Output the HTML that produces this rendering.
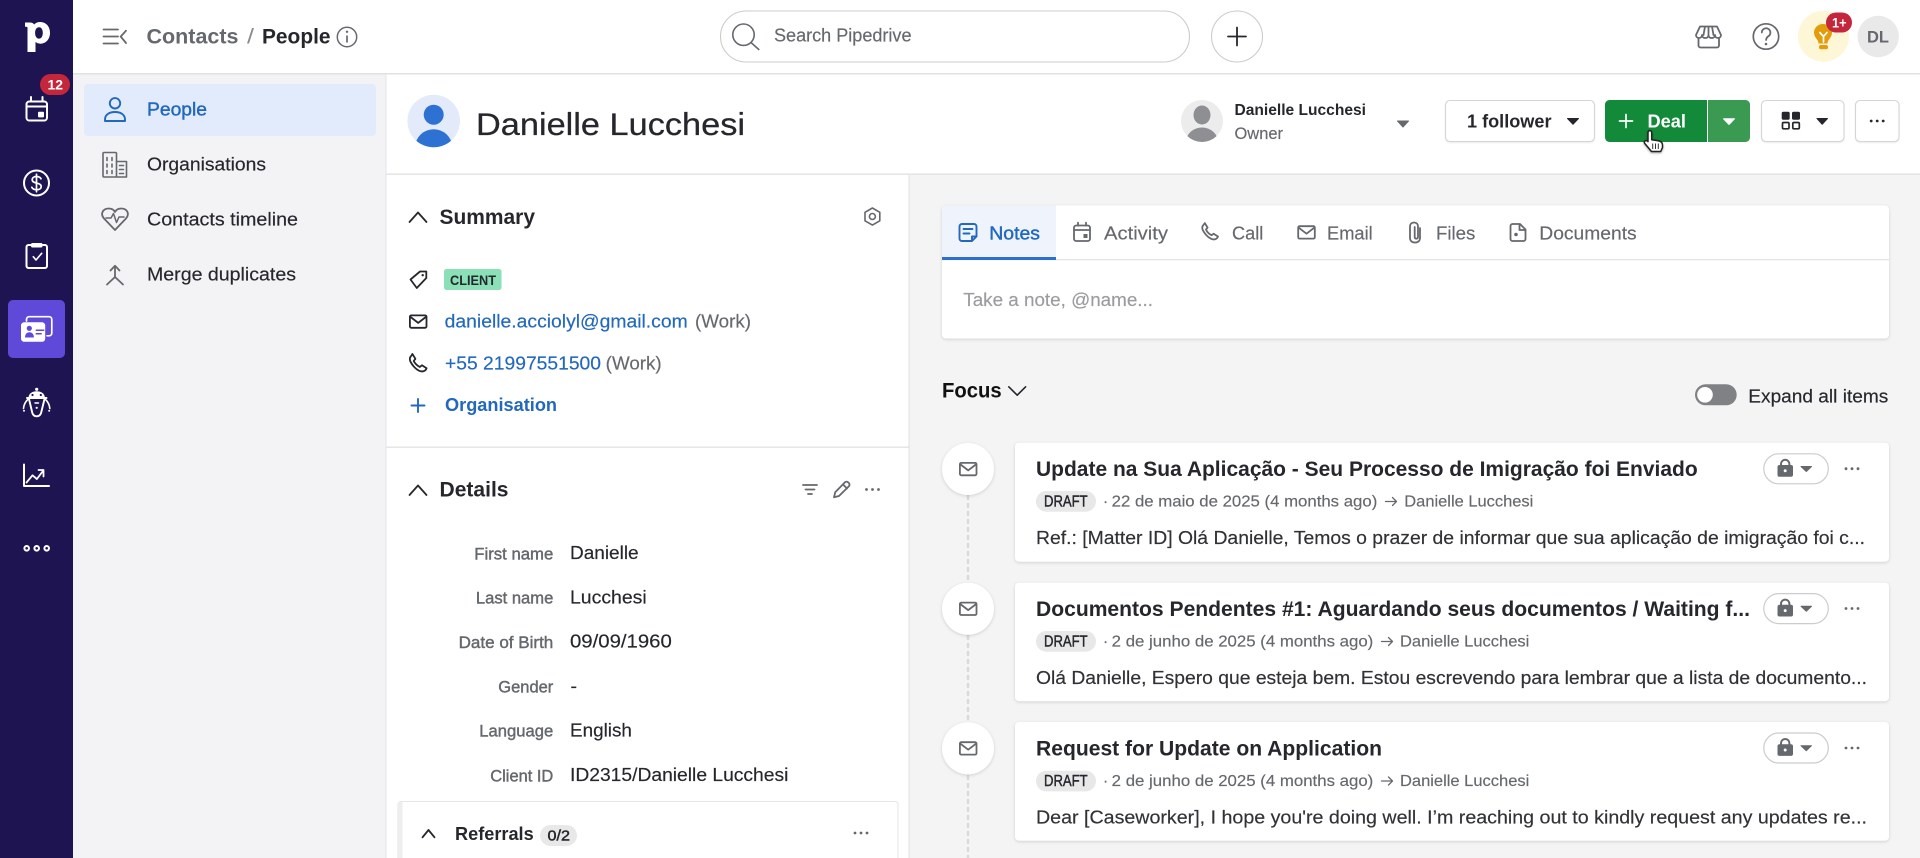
<!DOCTYPE html>
<html lang="en">
<head>
<meta charset="utf-8">
<title>Danielle Lucchesi - Pipedrive</title>
<style>
html,body{margin:0;padding:0;width:1920px;height:858px;overflow:hidden;background:#f4f4f4}
svg{display:block}
text{font-family:"Liberation Sans",Arial,sans-serif;font-size:18.300px;fill:#25272d;stroke:#25272d;stroke-width:.16;white-space:pre}
.g{fill:#65686d;stroke:#65686d}.bl{fill:#2268bd;stroke:#2268bd}
.m{stroke:#25272d;stroke-width:.45}
.mg{fill:#65686d;stroke:#65686d;stroke-width:.42}
.mb{fill:#2268bd;stroke:#2268bd;stroke-width:.42}
.b{font-weight:bold;stroke:none}
.card{fill:#fff;filter:drop-shadow(0 1px 1.5px rgba(0,0,0,.14))}
.btn{fill:#fff;stroke:#d4d5d7;stroke-width:1.100;filter:drop-shadow(0 1px .6px rgba(0,0,0,.08))}
.i{fill:none;stroke-linecap:round;stroke-linejoin:round}
.w{stroke:#fff;stroke-width:2}
.gi{stroke:#65686d;stroke-width:1.800}
.di{stroke:#25272d;stroke-width:1.800}
.bi{stroke:#2268bd;stroke-width:1.900}
.sm{font-size:15.700px}
.lb{font-size:16.500px}
.t{font-size:21.500px;font-weight:bold;stroke:none}
</style>
</head>
<body>
<svg width="1920" height="858" viewBox="0 0 1920 858" xmlns="http://www.w3.org/2000/svg">
<defs>
<clipPath id="av"><circle cx="433.700" cy="121" r="26.300"/></clipPath>
<clipPath id="ow"><circle cx="1202" cy="121" r="21"/></clipPath>
<g id="env" class="i"><rect x="0.900" y="0.900" width="16.600" height="12.400" rx="1.400"/><path d="M1.400 2.400 9.200 8.400 17 2.400"/></g>
<g id="d3"><circle cx="-6" r="1.400"/><circle cx="0" r="1.400"/><circle cx="6" r="1.400"/></g>
</defs>

<rect width="1920" height="858" fill="#f4f4f4"/>

<!-- Rail -->
<g>
<rect width="73" height="858" fill="#1f1452"/>
<path fill="#fff" fill-rule="evenodd" d="M25 22.500h5c1.900 0 3.300.7 4.200 2 1.500-1.600 3.500-2.500 5.800-2.500 6 0 10 4.500 10 10.800S46 43.700 40.500 43.700c-2 0-3.800-.7-5-1.800V52h-8V28c0-1-.3-1.300-1.200-1.300H25ZM39 27.200c-2.600 0-3.900 2.500-3.900 5.700s1.400 5.800 3.900 5.800c2.400 0 3.800-2.500 3.800-5.800s-1.400-5.700-3.800-5.700Z"/>
<g class="i w"><rect x="26.500" y="101.500" width="20.500" height="19" rx="2.800"/><path d="M31 97v4M42.500 97v4M26.500 106.500h20.500"/></g>
<rect x="38" y="111.700" width="6" height="5.700" rx="1" fill="#fff"/>
<rect x="40" y="74" width="30" height="21" rx="10.500" fill="#c4273c"/>
<text x="47.500" y="89.600" class="b" style="font-size:14px;fill:#fff" textLength="15.500" lengthAdjust="spacingAndGlyphs">12</text>
<g class="i w"><circle cx="36.500" cy="183" r="12.500"/><path d="M41 178.800c-.8-1.500-2.400-2.300-4.500-2.300-2.600 0-4.300 1.300-4.300 3.200 0 4.500 9 2.300 9 6.800 0 2-1.900 3.300-4.700 3.300-2.200 0-3.900-.9-4.700-2.500M36.500 174.200v17.600" style="stroke-width:1.700"/></g>
<g class="i w"><rect x="26.500" y="245" width="20.500" height="23" rx="2"/><path d="M33.300 256.700 36 260l5.700-6.700" style="stroke-width:1.600"/></g>
<rect x="31" y="243" width="11.500" height="4.500" rx="1.500" fill="#fff"/>
<rect x="8" y="300" width="57" height="58" rx="5" fill="#5f49d8"/>
<path class="i" stroke="#fff" stroke-width="1.700" d="M26.500 321v-1.500a2.800 2.800 0 0 1 2.800-2.800H49a2.800 2.800 0 0 1 2.800 2.800V333a2.800 2.800 0 0 1-2.800 2.800h-2"/>
<rect x="21" y="322.300" width="24.200" height="19.500" rx="3.200" fill="#fff"/>
<circle cx="29.300" cy="328.300" r="2.600" fill="#5f49d8"/>
<path d="M25 337.500c0-3.500 1.800-5.300 4.400-5.300s4.500 1.800 4.500 5.300Z" fill="#5f49d8"/>
<path stroke="#5f49d8" stroke-width="1.500" d="M35.700 330.200h8.600M35.700 333.700h6"/>
<circle cx="36.700" cy="389.300" r="1.600" fill="#fff"/>
<path d="M28.500 397.300c.4-3.800 3.800-6 8.200-6s7.800 2.200 8.200 6Z" fill="#fff"/>
<circle cx="32.500" cy="395" r="1.100" fill="#1f1452"/><circle cx="40.800" cy="395" r="1.100" fill="#1f1452"/>
<g class="i" stroke="#fff" stroke-width="1.900">
<path d="M27 398h19.500"/>
<path d="M29 399l3.200 13.500c.6 2.500 2.400 3.800 4.500 3.800s3.900-1.300 4.500-3.800L44.500 399"/>
<path d="M28.300 399c-2.800 2.500-4.500 5.500-4.800 9.500M45 399c2.800 2.500 4.500 5.500 4.800 9.500" stroke-width="1.600"/>
<path d="M35 403h3.500" stroke-width="1.400"/>
</g>
<circle cx="36.700" cy="407.800" r="1.100" fill="#fff"/><circle cx="24" cy="410.800" r="1" fill="#fff"/><circle cx="49.200" cy="410.800" r="1" fill="#fff"/>
<g class="i w"><path d="M24 464.500V486h25"/><path d="M26.500 482.500l6-7.200 4.400 3.700 6.400-8.500M38.500 470h5v6.500" style="stroke-width:1.800"/></g>
<g fill="none" stroke="#fff" stroke-width="2"><circle cx="26.700" cy="548.300" r="2.300"/><circle cx="36.700" cy="548.300" r="2.300"/><circle cx="46.700" cy="548.300" r="2.300"/></g>
</g>

<!-- Subnav -->
<g>
<rect x="73" y="73" width="313" height="785" fill="#f3f3f5"/>
<rect x="385.500" y="73" width="1.500" height="785" fill="#e6e6e8"/>
<rect x="84" y="84" width="292" height="52" rx="4" fill="#e1ebfc"/>
<g class="i bi"><circle cx="115" cy="103.300" r="5.200"/><path d="M105 121v-1.500c0-5 4.500-7.500 10-7.500s10 2.500 10 7.500v1.500Z"/></g>
<text x="147" y="115.500" class="mb" textLength="60" lengthAdjust="spacingAndGlyphs">People</text>
<g class="i gi" style="stroke-width:1.600"><rect x="103" y="152.500" width="13.500" height="24.500" rx="1"/><path d="M116.500 161.500h10v15.500h-10M107 157.500v3M112 157.500v3M107 164v3M112 164v3M107 170.500v3M112 170.500v3M119.500 165.500h4M119.500 169.500h4M119.500 173.500h4"/></g>
<text x="147" y="170.500" textLength="119" lengthAdjust="spacingAndGlyphs">Organisations</text>
<g class="i gi"><path d="M115 230 104.500 219c-4.800-5-1.700-10.500 4.300-10.500 3 0 5.200 1.500 6.200 3.500 1-2 3.200-3.500 6.200-3.500 6 0 9.100 5.500 4.300 10.500Z"/><path d="M106 218h5l2.500-4.500 3 9 2.500-5.500h5" style="stroke-width:1.500"/></g>
<text x="147" y="225.500" textLength="151" lengthAdjust="spacingAndGlyphs">Contacts timeline</text>
<g class="i gi"><path d="M110.500 270.500 115 265.800l4.500 4.700M115 266v11M115 277l-8 7.500M115 277l8 7.500"/></g>
<text x="147" y="280.500" textLength="149" lengthAdjust="spacingAndGlyphs">Merge duplicates</text>
</g>

<!-- Top bar -->
<g>
<rect x="73" y="0" width="1847" height="73" fill="#fff"/>
<rect x="73" y="73" width="1847" height="1.500" fill="#e1e1e2"/>
<g class="i gi"><path d="M103.500 29.500H118M103.500 36.500H118M103.500 43.500H118M126 30.700l-5.300 5.900 5.300 6.400"/></g>
<text x="146.500" y="43.500" class="b" style="font-size:21px;fill:#65686d" textLength="92" lengthAdjust="spacingAndGlyphs">Contacts</text>
<text x="247" y="43.500" style="font-size:21px;fill:#8a8c90;stroke:none" textLength="7" lengthAdjust="spacingAndGlyphs">/</text>
<text x="262" y="43.500" class="b" style="font-size:21px" textLength="68.500" lengthAdjust="spacingAndGlyphs">People</text>
<circle cx="347" cy="37" r="9.700" fill="none" stroke="#65686d" stroke-width="1.500"/>
<path d="M347 35.500v7" stroke="#65686d" stroke-width="1.700" fill="none"/><circle cx="347" cy="31.800" r="1.200" fill="#65686d"/>
<rect x="720.500" y="11" width="469" height="51" rx="25.500" fill="#fff" stroke="#cbcccd" stroke-width="1.100"/>
<g class="i" stroke="#65686d" stroke-width="1.600"><circle cx="743.500" cy="34.700" r="10.700"/><path d="M751.500 43l7.300 6.500"/></g>
<text x="774" y="41.700" class="g" textLength="137.500" lengthAdjust="spacingAndGlyphs">Search Pipedrive</text>
<rect x="1211.500" y="11" width="51" height="51" rx="25.500" fill="#fff" stroke="#cbcccd" stroke-width="1.100"/>
<path d="M1237 27.500v18M1228 36.500h18" stroke="#25272d" stroke-width="1.800" stroke-linecap="round"/>
<g class="i gi"><path d="M1700 26.500h17l4 8.500c0 2-1.500 3-3 3s-3-1-3-3c0 2-1.700 3-3.300 3s-3.200-1-3.200-3c0 2-1.600 3-3.200 3s-3.300-1-3.300-3c0 2-1.500 3-3 3s-3-1-3-3ZM1705 26.500l-1.500 8.500M1712 26.500l1.500 8.500M1708.500 26.500V35"/><path d="M1698.500 38v7.500a2 2 0 0 0 2 2h16.500a2 2 0 0 0 2-2V38"/></g>
<circle cx="1766" cy="36.500" r="12.700" fill="none" stroke="#65686d" stroke-width="1.700"/>
<path class="i gi" d="M1761.800 32.500a4.300 4.300 0 1 1 6.900 3.500c-1.600 1.100-2.600 2-2.600 4"/><circle cx="1766" cy="44" r="1.300" fill="#65686d"/>
<circle cx="1823.500" cy="36.200" r="25.500" fill="#fdf6d7"/>
<path d="M1823 24c-5 0-9 3.800-9 8.500 0 3.200 1.800 5.300 3.200 7.300.9 1.300 1.300 2.300 1.300 3.700h9c0-1.400.4-2.400 1.300-3.700 1.400-2 3.200-4.100 3.200-7.300 0-4.700-4-8.500-9-8.500Z" fill="#e29c0c"/>
<rect x="1819" y="45" width="9" height="4.300" rx="2" fill="#e29c0c"/>
<path class="i" stroke="#fff" stroke-width="1.700" d="M1819.800 32.500 1823.500 36.500 1827 32.500M1823.500 36.500V42"/>
<rect x="1826" y="12.500" width="26" height="20" rx="10" fill="#c4273c"/>
<text x="1832" y="27.600" class="b" style="font-size:14px;fill:#fff" textLength="14.500" lengthAdjust="spacingAndGlyphs">1+</text>
<circle cx="1878.200" cy="36.500" r="20.700" fill="#e9e9ea"/>
<text x="1867" y="42.700" class="b" style="font-size:17px;fill:#65686d" textLength="22" lengthAdjust="spacingAndGlyphs">DL</text>
</g>

<!-- Contact header -->
<g>
<rect x="386.500" y="74.500" width="1533.500" height="100" fill="#fff"/>
<rect x="386.500" y="173.500" width="1533.500" height="1.300" fill="#e1e1e2"/>
<circle cx="433.700" cy="121" r="26.300" fill="#e3ebfa"/>
<g clip-path="url(#av)" fill="#2d72d2"><circle cx="433.700" cy="114.700" r="10"/><ellipse cx="433.700" cy="147" rx="18.500" ry="17.700"/></g>
<text x="476" y="135" style="font-size:31.500px;stroke-width:.25" textLength="269" lengthAdjust="spacingAndGlyphs">Danielle Lucchesi</text>
<circle cx="1202" cy="121" r="21" fill="#ececed"/>
<g clip-path="url(#ow)" fill="#8e8f92"><ellipse cx="1202" cy="115" rx="8.500" ry="9.500"/><ellipse cx="1202" cy="142" rx="16" ry="14.500"/></g>
<text x="1234.500" y="115" class="b" style="font-size:15.500px" textLength="131.500" lengthAdjust="spacingAndGlyphs">Danielle Lucchesi</text>
<text x="1234.500" y="139" class="g" style="font-size:16.500px" textLength="48.500" lengthAdjust="spacingAndGlyphs">Owner</text>
<path d="M1397.500 121h11l-5.500 6Z" fill="#65686d" stroke="#65686d" stroke-linejoin="round"/>
<rect x="1445.500" y="100.500" width="149" height="41" rx="4.500" class="btn"/>
<text x="1467" y="127.300" class="b" style="font-size:18.500px" textLength="84.500" lengthAdjust="spacingAndGlyphs">1 follower</text>
<path d="M1567.500 118.500h11l-5.500 5.800Z" fill="#25272d" stroke="#25272d" stroke-linejoin="round"/>
<path d="M1609.500 100H1707v42h-97.500a4.500 4.500 0 0 1-4.500-4.500v-33a4.500 4.500 0 0 1 4.500-4.500Z" fill="#138a3a"/>
<path d="M1708 100h37.500a4.500 4.500 0 0 1 4.500 4.500v33a4.500 4.500 0 0 1-4.500 4.500H1708Z" fill="#3b9a51"/>
<path d="M1626 114.500v13M1619.500 121h13" stroke="#fff" stroke-width="1.700" stroke-linecap="round"/>
<text x="1647.500" y="127.300" class="b" style="font-size:18.500px;fill:#fff" textLength="38.500" lengthAdjust="spacingAndGlyphs">Deal</text>
<path d="M1723.500 118.800h11l-5.500 5.700Z" fill="#fff" stroke="#fff" stroke-linejoin="round"/>
<g style="filter:drop-shadow(0 1px 1px rgba(0,0,0,.35))">
<path d="M1648 132.500c0-2.500 3.700-2.500 3.700 0v7.200l6.500 1.100c2.700.5 4.300 1.700 4.300 4.200v2.500l-1.800 4h-9.200l-6.700-8c-1.600-2.100 1.100-3.900 3-2.100l.2.200Z" fill="#fff" stroke="#222" stroke-width="1.500" stroke-linejoin="round"/>
<path d="M1652.700 143.500v5.500M1655.500 143.500v5.500M1658.300 143.500v5.500" stroke="#333" stroke-width="1"/>
</g>
<rect x="1761.500" y="100.500" width="82.500" height="41" rx="4.500" class="btn"/>
<g fill="#25272d"><rect x="1781.700" y="111.700" width="8" height="8" rx="1.600"/><rect x="1792" y="111.700" width="8" height="8" rx="1.600"/></g>
<g fill="none" stroke="#25272d" stroke-width="1.700"><rect x="1782.500" y="122.500" width="6.500" height="6.300" rx="1.200"/><rect x="1792.800" y="122.500" width="6.500" height="6.300" rx="1.200"/></g>
<path d="M1817 118.500h10.500l-5.300 5.800Z" fill="#25272d" stroke="#25272d" stroke-linejoin="round"/>
<rect x="1855.500" y="100.500" width="43.500" height="41" rx="4.500" class="btn"/>
<use href="#d3" x="1877.200" y="121" fill="#25272d"/>
</g>

<!-- Left panel -->
<g>
<rect x="386.500" y="175" width="523" height="683" fill="#fff"/>
<rect x="908.500" y="175" width="1.300" height="683" fill="#e6e6e7"/>
<path class="i di" d="M409.500 222l8.500-9.500 8.500 9.500"/>
<text x="439.500" y="224" class="b" style="font-size:21.500px" textLength="95.500" lengthAdjust="spacingAndGlyphs">Summary</text>
<g class="i gi" style="stroke-width:1.600"><path d="M872.400 208l7.400 4.300v8.500l-7.400 4.300-7.400-4.300v-8.500Z"/><circle cx="872.400" cy="216.500" r="3"/></g>
<g class="i di"><path d="M410.500 279.500 420 271.500h6.300v6.500l-9.500 10Z"/></g><circle cx="422.700" cy="275.200" r="1.200" fill="#25272d"/>
<rect x="444" y="269" width="57.500" height="21" rx="2.500" fill="#8be0b7"/>
<text x="450" y="285" class="b" style="font-size:14px" textLength="46" lengthAdjust="spacingAndGlyphs">CLIENT</text>
<use href="#env" x="409" y="314.500" class="di"/>
<text x="444.700" y="327.700" class="bl" textLength="243" lengthAdjust="spacingAndGlyphs">danielle.acciolyl@gmail.com</text>
<text x="695" y="327.700" class="g" textLength="56" lengthAdjust="spacingAndGlyphs">(Work)</text>
<path class="i di" d="M411.500 355.500c-1.800 1.600-2 4-1 6.200 1.600 3.300 5 7.300 8.500 9 2.300 1 4.800 1 6.600-.7l1-1.700-4.700-3-2.200 1.700c-2.300-1.100-5-3.800-6-6l1.700-2.200-3-4.800Z"/>
<text x="445" y="369.300" class="bl" textLength="156" lengthAdjust="spacingAndGlyphs">+55 21997551500</text>
<text x="605.700" y="369.300" class="g" textLength="56" lengthAdjust="spacingAndGlyphs">(Work)</text>
<path d="M418 399v13M411.500 405.500h13" stroke="#2268bd" stroke-width="1.900" stroke-linecap="round"/>
<text x="445" y="411" class="bl b" textLength="112" lengthAdjust="spacingAndGlyphs">Organisation</text>
<rect x="386.500" y="446.500" width="523" height="1.300" fill="#e1e1e2"/>
<path class="i di" d="M409.500 495l8.500-9.500 8.500 9.500"/>
<text x="439.500" y="496.700" class="b" style="font-size:21.500px" textLength="69" lengthAdjust="spacingAndGlyphs">Details</text>
<path class="i gi" d="M803 485h14M805.500 489.500h9M808 494h4"/>
<g class="i gi"><path d="M834 497.300l1.200-5L845 482.300a2.200 2.200 0 0 1 3.100 0l.8.8a2.200 2.200 0 0 1 0 3.100L839 496ZM843 484.500l4 4"/></g>
<use href="#d3" x="872.500" y="489.500" fill="#65686d"/>

<text x="474.300" y="559.300" class="lb mg" textLength="79" lengthAdjust="spacingAndGlyphs">First name</text>
<text x="475.900" y="603.700" class="lb mg" textLength="77.400" lengthAdjust="spacingAndGlyphs">Last name</text>
<text x="458.600" y="648" class="lb mg" textLength="94.700" lengthAdjust="spacingAndGlyphs">Date of Birth</text>
<text x="498.300" y="692.300" class="lb mg" textLength="55" lengthAdjust="spacingAndGlyphs">Gender</text>
<text x="479.300" y="736.700" class="lb mg" textLength="74" lengthAdjust="spacingAndGlyphs">Language</text>
<text x="490.300" y="781.300" class="lb mg" textLength="63" lengthAdjust="spacingAndGlyphs">Client ID</text>
<text x="570" y="559" textLength="68.600" lengthAdjust="spacingAndGlyphs">Danielle</text>
<text x="570" y="603.300" textLength="76.700" lengthAdjust="spacingAndGlyphs">Lucchesi</text>
<text x="570" y="647.700" textLength="101.800" lengthAdjust="spacingAndGlyphs">09/09/1960</text>
<text x="570.500" y="692" textLength="6.500" lengthAdjust="spacingAndGlyphs">-</text>
<text x="570" y="736.700" textLength="61.900" lengthAdjust="spacingAndGlyphs">English</text>
<text x="570" y="781" textLength="218.400" lengthAdjust="spacingAndGlyphs">ID2315/Danielle Lucchesi</text>

<rect x="398" y="801.500" width="500" height="70" rx="3" fill="#fff" stroke="#e6e6e7" stroke-width="1.100"/>
<rect x="398" y="802" width="4.500" height="56" fill="#eeeeef"/>
<path class="i di" d="M422.500 837.300l6-7.300 6 7.300"/>
<text x="455" y="840" class="b" style="font-size:18.500px" textLength="78.700" lengthAdjust="spacingAndGlyphs">Referrals</text>
<rect x="540" y="825" width="37" height="21" rx="10.500" fill="#e8e8e9"/>
<text x="547.500" y="840.500" class="m" style="font-size:14.500px" textLength="22.500" lengthAdjust="spacingAndGlyphs">0/2</text>
<use href="#d3" x="861" y="833" fill="#65686d"/>
</g>

<!-- Composer -->
<g>
<rect x="942" y="205.500" width="947" height="133" rx="4" class="card"/>
<path d="M946 205.500h110V260H942v-50.500a4 4 0 0 1 4-4Z" fill="#eff4fc"/>
<rect x="942" y="259" width="947" height="1.300" fill="#e4e4e5"/>
<rect x="942" y="257" width="114" height="3" fill="#2d6fd0"/>
<g class="i bi"><path d="M972 241h-10a2.500 2.500 0 0 1-2.500-2.500v-12a2.500 2.500 0 0 1 2.500-2.500h12a2.500 2.500 0 0 1 2.500 2.500V236.500L972 241Zm0 0v-4.500h4.500M963.500 229h9M963.500 233.500h6"/></g>
<text x="989.300" y="239.300" class="mb" textLength="50.700" lengthAdjust="spacingAndGlyphs">Notes</text>
<g class="i gi"><rect x="1074" y="225.500" width="16" height="15.500" rx="2.200"/><path d="M1078 222.700v3M1086 222.700v3M1074 230h16"/></g><rect x="1083.500" y="234" width="4" height="4" fill="#65686d"/>
<text x="1104" y="239.300" class="g" textLength="64" lengthAdjust="spacingAndGlyphs">Activity</text>
<path class="i gi" d="M1203.800 224.500c-1.700 1.500-1.900 3.700-.9 5.800 1.500 3.100 4.700 6.800 8 8.400 2.100 1 4.500 1 6.200-.6l.9-1.600-4.400-2.800-2 1.500c-2.100-1-4.600-3.500-5.600-5.600l1.600-2-2.800-4.500Z"/>
<text x="1232" y="239.300" class="g" textLength="31.300" lengthAdjust="spacingAndGlyphs">Call</text>
<use href="#env" x="1297.300" y="225.300" class="gi"/>
<text x="1327" y="239.300" class="g" textLength="45.700" lengthAdjust="spacingAndGlyphs">Email</text>
<path class="i gi" d="M1420 228v10c0 2.800-2 4.500-5 4.500s-5-1.700-5-4.500v-11.500c0-2.500 1.700-4 4-4s4 1.500 4 4V237c0 1-.7 1.700-1.700 1.700s-1.600-.7-1.600-1.700V227"/>
<text x="1436" y="239.300" class="g" textLength="39.300" lengthAdjust="spacingAndGlyphs">Files</text>
<path class="i gi" d="M1512.500 224h7.500l5.500 5.500V239a2 2 0 0 1-2 2h-11a2 2 0 0 1-2-2v-13a2 2 0 0 1 2-2ZM1519.500 224.500v5.500h5.500"/><circle cx="1516" cy="234.500" r="1.800" fill="#65686d"/>
<text x="1539.300" y="239.300" class="g" textLength="97.400" lengthAdjust="spacingAndGlyphs">Documents</text>
<text x="963.300" y="306" style="fill:#9a9c9f;stroke:#9a9c9f" textLength="189.700" lengthAdjust="spacingAndGlyphs">Take a note, @name...</text>
</g>

<!-- Focus -->
<text x="942" y="397.300" class="b" style="font-size:21px;fill:#111" textLength="59.700" lengthAdjust="spacingAndGlyphs">Focus</text>
<path class="i di" style="stroke-width:1.600" d="M1008.800 386.800l8.400 8.400 8.400-8.400"/>
<rect x="1695" y="384.300" width="41.700" height="21" rx="10.500" fill="#808184"/>
<circle cx="1705" cy="394.800" r="7.800" fill="#fff"/>
<text x="1748.300" y="402.300" textLength="140" lengthAdjust="spacingAndGlyphs">Expand all items</text>

<!-- Timeline -->
<path d="M968 495v88M968 635v87M968 775v83" stroke="#dadadb" stroke-width="2.500" stroke-dasharray="5 3" fill="none"/>
<g>
<circle cx="968" cy="469" r="26" class="card"/><use href="#env" x="959" y="462" class="gi"/>
<circle cx="968" cy="608.700" r="26" class="card"/><use href="#env" x="959" y="601.700" class="gi"/>
<circle cx="968" cy="748.300" r="26" class="card"/><use href="#env" x="959" y="741.300" class="gi"/>
</g>

<!-- Card 1 -->
<g>
<rect x="1015" y="442.700" width="874" height="119" rx="4" class="card"/>
<text x="1036" y="476" class="t" textLength="661.700" lengthAdjust="spacingAndGlyphs">Update na Sua Aplicação - Seu Processo de Imigração foi Enviado</text>
<rect x="1036" y="491" width="60" height="20.700" rx="10.300" fill="#e8e8e9"/>
<text x="1044" y="506.400" class="sm m" textLength="43.700" lengthAdjust="spacingAndGlyphs">DRAFT</text>
<text x="1103" y="506.600" class="sm g">·</text>
<text x="1111.700" y="506.600" class="sm g" textLength="265.600" lengthAdjust="spacingAndGlyphs">22 de maio de 2025 (4 months ago)</text>
<path class="i" stroke="#65686d" stroke-width="1.300" d="M1385.500 501.500h11M1392.500 497.500l4 4-4 4"/>
<text x="1404.300" y="506.600" class="sm g" textLength="129" lengthAdjust="spacingAndGlyphs">Danielle Lucchesi</text>
<text x="1036" y="544" style="fill:#303236" textLength="829" lengthAdjust="spacingAndGlyphs">Ref.: [Matter ID] Olá Danielle, Temos o prazer de informar que sua aplicação de imigração foi c...</text>
<rect x="1763.800" y="453.800" width="64.500" height="30" rx="15" fill="#fff" stroke="#cbcccd" stroke-width="1.200"/>
<path d="M1781 465.500v-1.500a4.200 4.200 0 0 1 8.400 0v1.500" fill="none" stroke="#65686d" stroke-width="2"/><rect x="1777.500" y="465" width="15.500" height="11.700" rx="2" fill="#65686d"/><circle cx="1785.200" cy="470.800" r="1.500" fill="#fff"/>
<path d="M1801 466.500h10.500l-5.200 5Z" fill="#65686d" stroke="#65686d" stroke-linejoin="round"/>
<use href="#d3" x="1852" y="468.700" fill="#65686d"/>
</g>

<!-- Card 2 -->
<g>
<rect x="1015" y="582.700" width="874" height="118.500" rx="4" class="card"/>
<text x="1036" y="616" class="t" textLength="714" lengthAdjust="spacingAndGlyphs">Documentos Pendentes #1: Aguardando seus documentos / Waiting f...</text>
<rect x="1036" y="631" width="60" height="20.700" rx="10.300" fill="#e8e8e9"/>
<text x="1044" y="646.400" class="sm m" textLength="43.700" lengthAdjust="spacingAndGlyphs">DRAFT</text>
<text x="1103" y="646.600" class="sm g">·</text>
<text x="1111.700" y="646.600" class="sm g" textLength="261.600" lengthAdjust="spacingAndGlyphs">2 de junho de 2025 (4 months ago)</text>
<path class="i" stroke="#65686d" stroke-width="1.300" d="M1381.500 641.500h11M1388.500 637.500l4 4-4 4"/>
<text x="1400" y="646.600" class="sm g" textLength="129.300" lengthAdjust="spacingAndGlyphs">Danielle Lucchesi</text>
<text x="1036" y="684" style="fill:#303236" textLength="831" lengthAdjust="spacingAndGlyphs">Olá Danielle, Espero que esteja bem. Estou escrevendo para lembrar que a lista de documento...</text>
<rect x="1763.800" y="593.600" width="64.500" height="30" rx="15" fill="#fff" stroke="#cbcccd" stroke-width="1.200"/>
<path d="M1781 605.300v-1.500a4.200 4.200 0 0 1 8.400 0v1.500" fill="none" stroke="#65686d" stroke-width="2"/><rect x="1777.500" y="604.800" width="15.500" height="11.700" rx="2" fill="#65686d"/><circle cx="1785.200" cy="610.600" r="1.500" fill="#fff"/>
<path d="M1801 606.300h10.500l-5.200 5Z" fill="#65686d" stroke="#65686d" stroke-linejoin="round"/>
<use href="#d3" x="1852" y="608.500" fill="#65686d"/>
</g>

<!-- Card 3 -->
<g>
<rect x="1015" y="722" width="874" height="118.700" rx="4" class="card"/>
<text x="1036" y="755.300" class="t" textLength="346" lengthAdjust="spacingAndGlyphs">Request for Update on Application</text>
<rect x="1036" y="770.700" width="60" height="20.700" rx="10.300" fill="#e8e8e9"/>
<text x="1044" y="786" class="sm m" textLength="43.700" lengthAdjust="spacingAndGlyphs">DRAFT</text>
<text x="1103" y="786.200" class="sm g">·</text>
<text x="1111.700" y="786.200" class="sm g" textLength="261.600" lengthAdjust="spacingAndGlyphs">2 de junho de 2025 (4 months ago)</text>
<path class="i" stroke="#65686d" stroke-width="1.300" d="M1381.500 781h11M1388.500 777l4 4-4 4"/>
<text x="1400" y="786.200" class="sm g" textLength="129.300" lengthAdjust="spacingAndGlyphs">Danielle Lucchesi</text>
<text x="1036" y="823.300" style="fill:#303236;stroke:#303236" textLength="831" lengthAdjust="spacingAndGlyphs">Dear [Caseworker], I hope you're doing well. I’m reaching out to kindly request any updates re...</text>
<rect x="1763.800" y="733" width="64.500" height="30" rx="15" fill="#fff" stroke="#cbcccd" stroke-width="1.200"/>
<path d="M1781 744.700v-1.500a4.200 4.200 0 0 1 8.400 0v1.500" fill="none" stroke="#65686d" stroke-width="2"/><rect x="1777.500" y="744.200" width="15.500" height="11.700" rx="2" fill="#65686d"/><circle cx="1785.200" cy="750" r="1.500" fill="#fff"/>
<path d="M1801 745.700h10.500l-5.200 5Z" fill="#65686d" stroke="#65686d" stroke-linejoin="round"/>
<use href="#d3" x="1852" y="748" fill="#65686d"/>
</g>
</svg>
</body>
</html>
